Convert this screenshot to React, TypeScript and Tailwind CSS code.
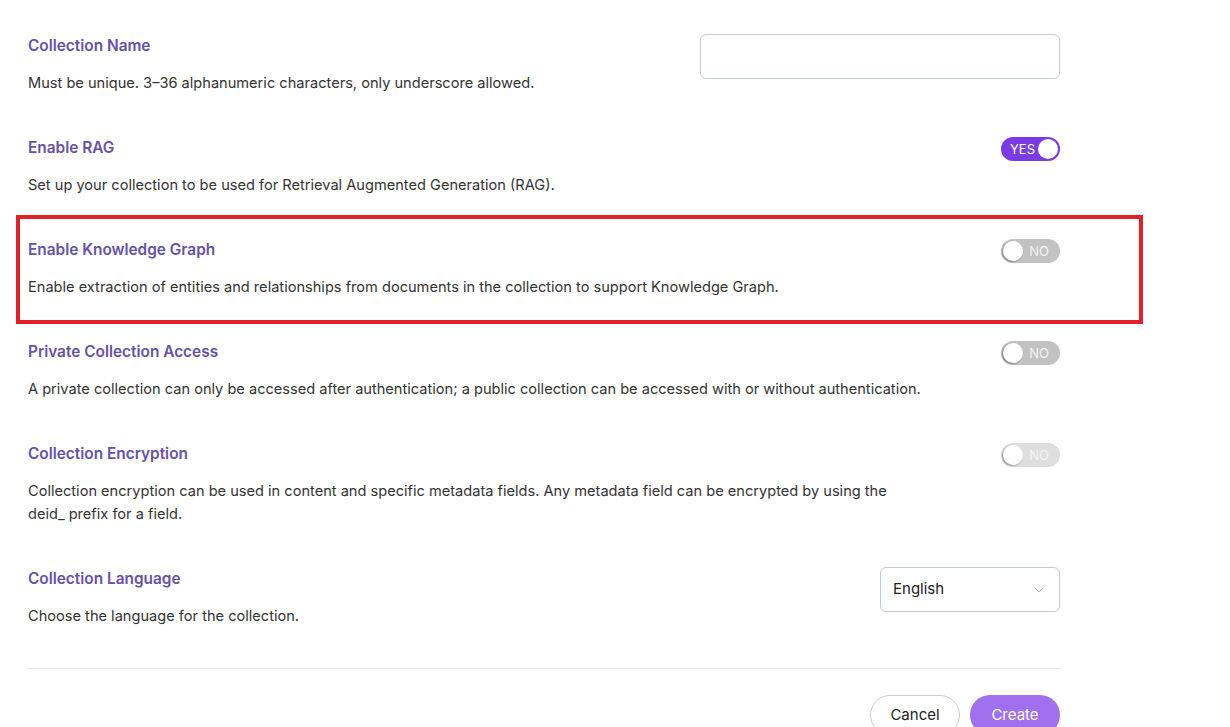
import * as React from "react";
import { ChevronDown } from "lucide-react";

type ToggleProps = { on?: boolean; disabled?: boolean };

const Toggle: React.FC<ToggleProps> = ({ on, disabled }) => {
  if (on) {
    return (
      <div className="mt-[2px] flex h-6 w-[59px] items-center justify-between rounded-full bg-[#7b3be2] pl-[9px] pr-[2px]">
        <span className="text-[13px] leading-none text-white">YES</span>
        <span className="h-5 w-5 rounded-full bg-white" />
      </div>
    );
  }
  return (
    <div
      className={
        disabled
          ? "mt-[2px] flex h-6 w-[59px] items-center justify-between rounded-full bg-[#dedede] pl-[2px] pr-[11px]"
          : "mt-[2px] flex h-6 w-[59px] items-center justify-between rounded-full bg-[#c2c2c2] pl-[2px] pr-[11px]"
      }
    >
      <span className="h-5 w-5 rounded-full bg-white shadow-[-1px_1px_2px_rgba(0,0,0,0.35)]" />
      <span className="text-[13px] leading-none text-[#f4f4f4]">NO</span>
    </div>
  );
};

type RowProps = {
  title: string;
  desc: string;
  control: React.ReactNode;
  highlight?: boolean;
};

const Row: React.FC<RowProps> = ({ title, desc, control, highlight }) => (
  <div className="relative flex items-start justify-between py-5">
    {highlight && (
      <div className="pointer-events-none absolute -top-[2px] -bottom-[5px] -left-[12px] -right-[83px] border-4 border-[#e3202a]" />
    )}
    <div className="max-w-[895px]">
      <div className="pt-px text-[15.4px] font-semibold leading-6 text-[#6552a8]">{title}</div>
      <p className="mt-[14px] text-[14.6px] leading-[23px] text-[#333333]">{desc}</p>
    </div>
    {control}
  </div>
);

export default function App() {
  return (
    <div className="min-h-[727px] overflow-hidden bg-white pt-[13px] font-['Inter',sans-serif]">
      <div className="ml-[28px] w-[1032px]">
        <Row
          title="Collection Name"
          desc="Must be unique. 3–36 alphanumeric characters, only underscore allowed."
          control={
            <input
              type="text"
              className="mt-px h-[45px] w-[360px] rounded-md border border-[#c3cad6] bg-white px-3 outline-none"
            />
          }
        />
        <Row
          title="Enable RAG"
          desc="Set up your collection to be used for Retrieval Augmented Generation (RAG)."
          control={<Toggle on />}
        />
        <Row
          title="Enable Knowledge Graph"
          desc="Enable extraction of entities and relationships from documents in the collection to support Knowledge Graph."
          control={<Toggle />}
          highlight
        />
        <Row
          title="Private Collection Access"
          desc="A private collection can only be accessed after authentication; a public collection can be accessed with or without authentication."
          control={<Toggle />}
        />
        <Row
          title="Collection Encryption"
          desc="Collection encryption can be used in content and specific metadata fields. Any metadata field can be encrypted by using the deid_ prefix for a field."
          control={<Toggle disabled />}
        />
        <Row
          title="Collection Language"
          desc="Choose the language for the collection."
          control={
            <div className="mt-px flex h-[45px] w-[180px] items-center justify-between rounded-md border border-[#c3cad6] bg-white pl-3 pr-3">
              <span className="text-[15px] text-[#222222]">English</span>
              <ChevronDown className="h-4 w-4 text-[#b5b5b5]" strokeWidth={1.5} />
            </div>
          }
        />
        <div className="mt-5 border-t border-[#e6e6e6]" />
        <div className="mt-[26px] flex justify-end gap-[10px]">
          <button className="h-10 w-[90px] rounded-full border border-[#c6ccd4] bg-white text-[15px] text-[#222222]">
            Cancel
          </button>
          <button className="h-10 w-[90px] rounded-full bg-[#a070ee] text-[15px] text-white">
            Create
          </button>
        </div>
      </div>
    </div>
  );
}
